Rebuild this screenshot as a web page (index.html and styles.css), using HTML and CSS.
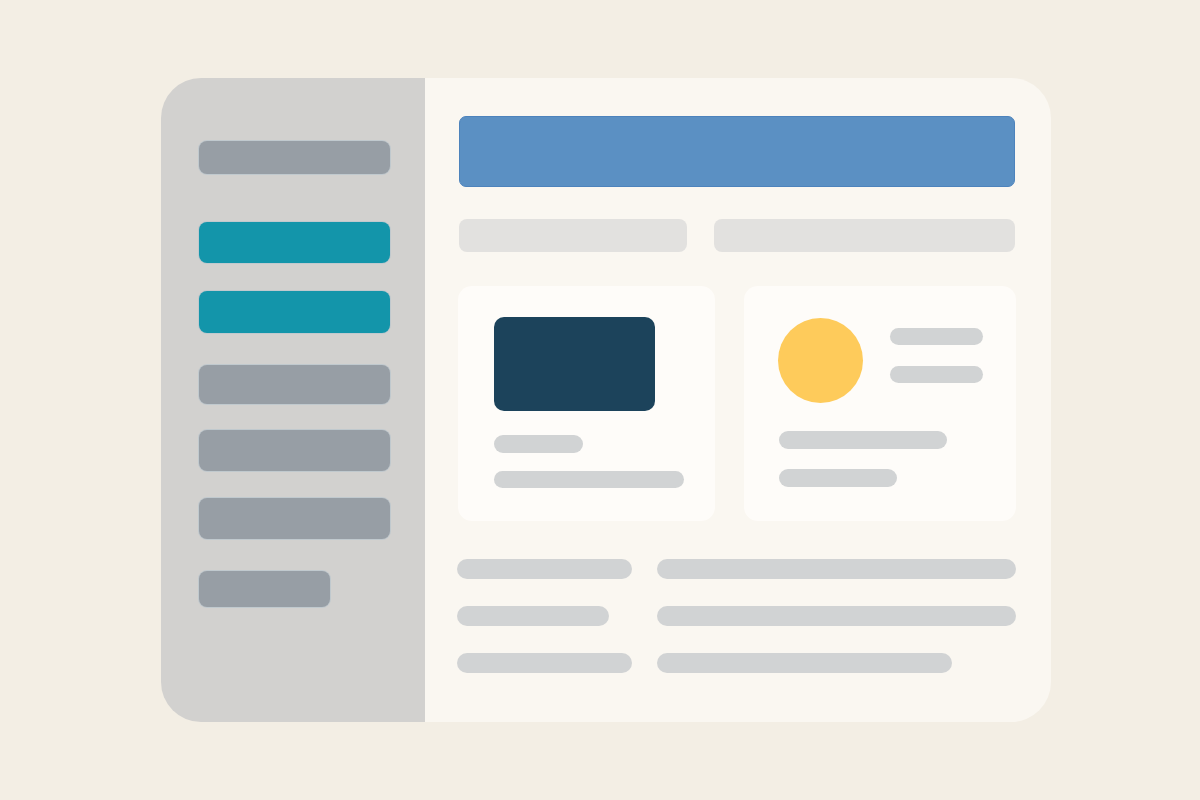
FILE: index.html
```html
<!DOCTYPE html>
<html>
<head>
<meta charset="utf-8">
<link rel="stylesheet" href="styles.css">
</head>
<body>
<div class="window">
  <aside class="sidebar">
    <div class="nav nav-title"></div>
    <div class="nav nav-active n2"></div>
    <div class="nav nav-active n3"></div>
    <div class="nav n4"></div>
    <div class="nav n5"></div>
    <div class="nav n6"></div>
    <div class="nav n7"></div>
  </aside>
  <main class="main">
    <div class="header"></div>
    <div class="tabs">
      <div class="tab tab-a"></div>
      <div class="tab tab-b"></div>
    </div>
    <div class="cards">
      <div class="card card-a">
        <div class="media"></div>
        <div class="line l-short"></div>
        <div class="line l-long"></div>
      </div>
      <div class="card card-b">
        <div class="profile">
          <div class="avatar"></div>
          <div class="profile-lines">
            <div class="line l-small"></div>
            <div class="line l-small"></div>
          </div>
        </div>
        <div class="line l-c"></div>
        <div class="line l-d"></div>
      </div>
    </div>
    <div class="rows">
      <div class="row"><div class="bar left w175"></div><div class="bar right w359"></div></div>
      <div class="row"><div class="bar left w152"></div><div class="bar right w359"></div></div>
      <div class="row"><div class="bar left w175"></div><div class="bar right w295"></div></div>
    </div>
  </main>
</div>
</body>
</html>
```
FILE: styles.css
```css
* { box-sizing: border-box; }
html, body { margin: 0; padding: 0; }
body {
  background: #f3eee4;
  width: 1200px;
  height: 800px;
  overflow: hidden;
  font-family: "Liberation Sans", sans-serif;
}
.window {
  margin: 78px 0 0 161px;
  width: 890px;
  height: 644px;
  border-radius: 40px;
  overflow: hidden;
  display: flex;
}
.sidebar {
  width: 264px;
  flex: none;
  background: #d2d1cf;
  padding: 63px 0 0 38px;
  display: flex;
  flex-direction: column;
}
.nav {
  width: 191px;
  height: 40px;
  background: #979ea5;
  border-radius: 8px;
  box-shadow: 0 0 0 1px rgba(180, 195, 205, 0.6);
}
.nav-title { height: 33px; }
.nav-active { background: #1395aa; height: 41px; }
.n2 { margin-top: 48px; }
.n3 { margin-top: 28px; height: 42px; }
.n4 { margin-top: 32px; height: 39px; }
.n5 { margin-top: 26px; height: 41px; }
.n6 { margin-top: 27px; height: 41px; }
.n7 { margin-top: 32px; width: 131px; height: 36px; }

.main {
  flex: 1;
  background: #faf7f1;
  padding: 38px 35px 0 33px;
  display: flex;
  flex-direction: column;
}
.header {
  height: 71px;
  margin: 0 1px 0 1px;
  background: #5b90c3;
  border: 1px solid #4d83bc;
  border-radius: 7px;
}
.tabs {
  margin-top: 32px;
  display: flex;
  gap: 27px;
  padding-left: 1px;
}
.tab {
  height: 33px;
  background: #e2e1df;
  border-radius: 8px;
}
.tab-a { width: 228px; }
.tab-b { width: 301px; }

.cards {
  margin-top: 34px;
  display: flex;
  gap: 29px;
}
.card {
  height: 235px;
  background: #fefcf9;
  border-radius: 14px;
  display: flex;
  flex-direction: column;
  align-items: flex-start;
}
.card-a { width: 257px; padding: 31px 0 0 36px; }
.card-b { width: 272px; padding: 32px 0 0 34px; }
.media {
  width: 161px;
  height: 94px;
  background: #1c435b;
  border-radius: 10px;
}
.line {
  background: #d1d3d4;
  border-radius: 9px;
  height: 18px;
}
.l-short { width: 89px; margin-top: 24px; }
.l-long { width: 190px; height: 17px; margin-top: 18px; }
.profile { display: flex; align-items: flex-start; gap: 27px; }
.avatar {
  width: 85px;
  height: 85px;
  border-radius: 50%;
  background: #fecb5b;
}
.profile-lines {
  padding-top: 10px;
  display: flex;
  flex-direction: column;
  gap: 21px;
}
.l-small { width: 93px; height: 17px; }
.l-c { width: 168px; margin-top: 28px; margin-left: 1px; }
.l-d { width: 118px; margin-top: 20px; margin-left: 1px; }

.rows {
  margin-top: 38px;
  display: flex;
  flex-direction: column;
  gap: 27px;
  padding-left: -1px;
}
.row { display: flex; gap: 25px; margin-left: -1px; }
.bar {
  height: 20px;
  background: #d1d3d4;
  border-radius: 10px;
}
.row .left { flex: none; }
.w175 { width: 175px; }
.w152 { width: 152px; margin-right: 23px; }
.w359 { width: 359px; }
.w295 { width: 295px; }
```
